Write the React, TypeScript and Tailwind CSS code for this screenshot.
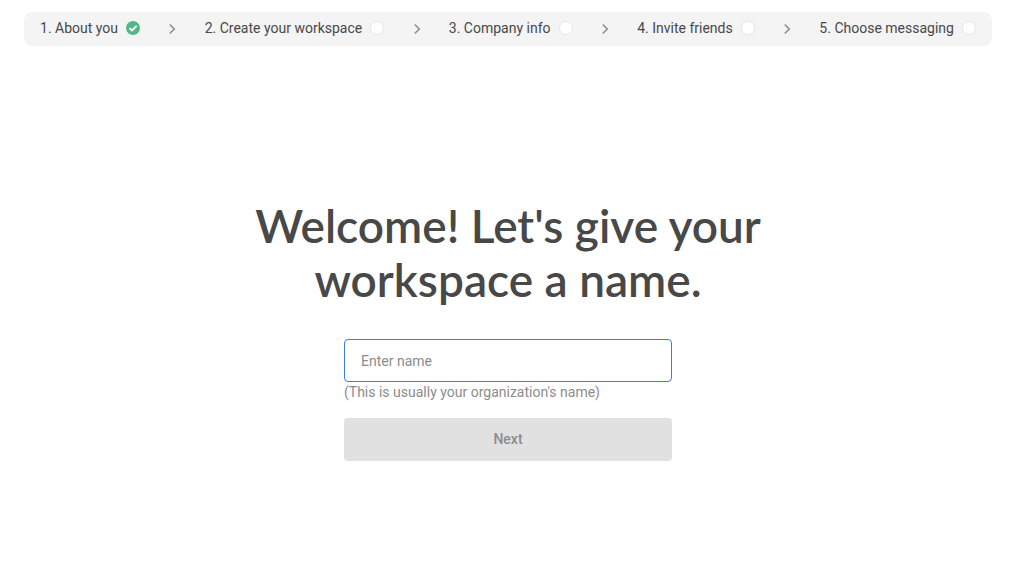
import { ChevronRight } from "lucide-react";

const steps = [
  { label: "About you", done: true },
  { label: "Create your workspace", done: false },
  { label: "Company info", done: false },
  { label: "Invite friends", done: false },
  { label: "Choose messaging", done: false },
];

function StepMark({ done }: { done: boolean }) {
  if (!done) {
    return <span className="size-3.5 shrink-0 rounded-full border border-[#e8e8e8] bg-white" />;
  }
  return (
    <svg viewBox="0 0 14 14" className="size-3.5 shrink-0" role="img" aria-label="Done">
      <circle cx="7" cy="7" r="7" fill="#52b788" />
      <path d="M3.5 7.1 6 9.4 10.6 4.8" fill="none" stroke="#fff" strokeWidth="1.9" />
    </svg>
  );
}

export default function App() {
  return (
    <div className="min-h-screen bg-white px-6 pt-3 font-['Roboto',sans-serif] text-[#484848]">
      <nav aria-label="Setup steps" className="mr-2 rounded-lg bg-[#f4f4f4] px-4">
        <ol className="flex h-[34px] items-center justify-between pb-0.5 text-sm">
          {steps.map((step, i) => (
            <li key={step.label} className="contents">
              {i > 0 && (
                <ChevronRight
                  className="mt-0.5 size-[18px] shrink-0 text-[#929292]"
                  strokeWidth={2.25}
                  strokeLinecap="butt"
                  strokeLinejoin="miter"
                  aria-hidden="true"
                />
              )}
              <span className="flex items-center gap-2 whitespace-nowrap">
                {i + 1}. {step.label}
                <StepMark done={step.done} />
              </span>
            </li>
          ))}
        </ol>
      </nav>
      <main className="mr-2 flex flex-col items-center pt-[153px]">
        <h1 className="max-w-[560px] text-center font-['Lato',sans-serif] text-[46px] leading-[54px] font-semibold">
          Welcome! Let's give your workspace a name.
        </h1>
        <form className="mt-8 flex w-full max-w-[328px] flex-col">
          <input
            aria-label="Workspace name"
            placeholder="Enter name"
            className="h-[43px] rounded-sm border border-[#3d7fd9] px-4 text-sm outline-none placeholder:text-[#8c8c8c]"
          />
          <p className="text-sm leading-5 text-[#8c8c8c]">(This is usually your organization's name)</p>
          <button type="button" className="mt-4 h-[43px] rounded-sm bg-[#e1e1e1] pb-0.5 text-sm font-medium text-[#8c8c8c]">
            Next
          </button>
        </form>
      </main>
    </div>
  );
}
